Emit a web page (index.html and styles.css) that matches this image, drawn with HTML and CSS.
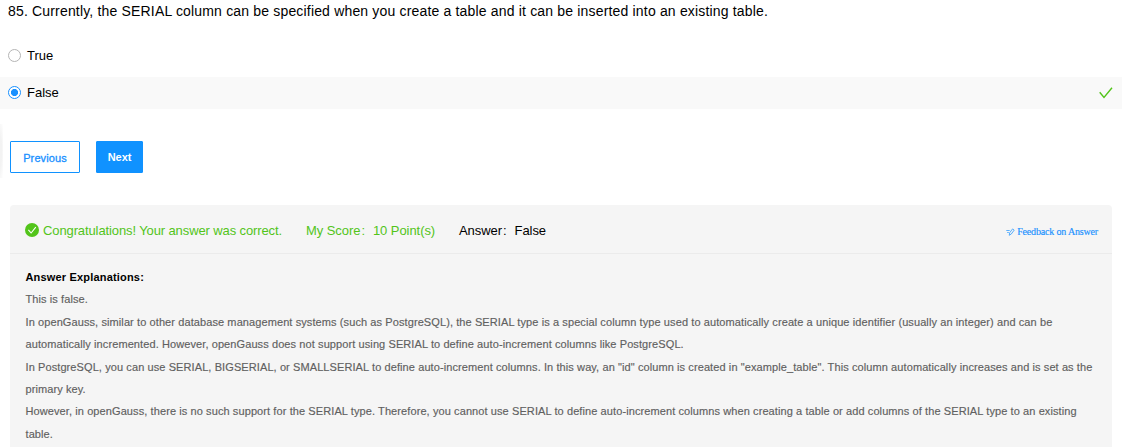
FILE: index.html
```html
<!DOCTYPE html>
<html lang="en">
<head>
<meta charset="utf-8">
<title>Question 85</title>
<link rel="stylesheet" href="styles.css">
</head>
<body>
<main class="page">
  <h1 class="question"><span>85. Currently, the SERIAL column can be specified when you create a table and it can be inserted into an existing table.</span></h1>
  <div class="option">
    <span class="radio"></span><span class="option-label">True</span>
  </div>
  <div class="option option-selected">
    <span class="radio radio-checked"></span><span class="option-label">False</span>
    <svg class="tick" width="14" height="12" viewBox="0 0 14 12" fill="none" stroke="#52c41a" stroke-width="1.4"><path d="M.7 5.2 5 10.4 13 .8"/></svg>
  </div>
  <div class="actions">
    <span class="edge"></span>
    <button class="btn btn-outline">Previous</button>
    <button class="btn btn-primary">Next</button>
  </div>
  <section class="result">
    <header class="summary">
      <svg class="badge" width="14" height="14" viewBox="0 0 14 14"><circle cx="7" cy="7" r="7" fill="#52c41a"/><path d="M3.4 6.8 6.1 10 10.8 4.2" fill="none" stroke="#fff" stroke-width="1.1"/></svg>
      <span class="congrats">Congratulations! Your answer was correct.</span>
      <span class="score"><span>My Score</span><span class="colon">:</span><span>10 Point(s)</span></span>
      <span class="answer"><span>Answer</span><span class="colon">:</span><span>False</span></span>
      <a class="feedback"><svg width="9" height="8" viewBox="0 0 9 8" fill="none" stroke="#1890ff" stroke-width=".7"><path d="M.3 2.5h3.4M1.2 4.5h1.6M3.2 7.3 3.7 4.7 6.6.9l1.6 1.2-2.9 3.9z"/></svg><span>Feedback on Answer</span></a>
    </header>
    <div class="explanation">
      <h2 class="heading">Answer Explanations:</h2>
      <p>This is false.</p>
      <p>In openGauss, similar to other database management systems (such as PostgreSQL), the SERIAL type is a special column type used to automatically create a unique identifier (usually an integer) and can be<br>automatically incremented. However, openGauss does not support using SERIAL to define auto-increment columns like PostgreSQL.</p>
      <p>In PostgreSQL, you can use SERIAL, BIGSERIAL, or SMALLSERIAL to define auto-increment columns. In this way, an "id" column is created in "example_table". This column automatically increases and is set as the<br>primary key.</p>
      <p>However, in openGauss, there is no such support for the SERIAL type. Therefore, you cannot use SERIAL to define auto-increment columns when creating a table or add columns of the SERIAL type to an existing<br>table.</p>
    </div>
  </section>
</main>
</body>
</html>
```
FILE: styles.css
```css
* { box-sizing: border-box; }
body {
  margin: 0;
  background: #fff;
  color: #000;
  font-family: "Liberation Sans", Arial, sans-serif;
  overflow: hidden;
}
.page { height: 447px; overflow: hidden; }
.question {
  margin: 0;
  padding: 0 8px;
  height: 40px;
  font-size: 14px;
  font-weight: 400;
  line-height: 22px;
  letter-spacing: 0.173px;
  white-space: nowrap;
}
.option {
  display: flex;
  align-items: center;
  height: 32px;
  padding: 0 9px 1px 8px;
  font-size: 13px;
}
.option-selected { margin-top: 5px; background: #f9f9f9; }
.radio {
  flex: none;
  width: 13px;
  height: 13px;
  margin-right: 6px;
  border: 1px solid #b5b5b5;
  border-radius: 50%;
  background: #fff;
}
.option-label { line-height: 15px; }
.radio-checked {
  border-color: #1890ff;
  background: radial-gradient(circle, #1890ff 3.2px, #fff 3.9px);
}
.tick { margin-left: auto; }
.actions {
  display: flex;
  height: 96px;
  padding-top: 32px;
}
.edge {
  width: 3px;
  height: 54px;
  margin: -17px 7px 0 0;
  background: radial-gradient(ellipse at left, #f3f3f3 40%, #fff 100%);
}
.btn {
  height: 32px;
  padding: 0;
  border: 1px solid #1092ff;
  border-radius: 1px;
  font: 700 11px "Liberation Sans", Arial, sans-serif;
}
.btn-outline {
  width: 70px;
  margin-right: 16px;
  padding-top: 2px;
  background: #fff;
  color: #1890ff;
  font-weight: 400;
  letter-spacing: 0.1px;
  -webkit-text-stroke: 0.3px #1890ff;
}
.btn-primary { width: 47px; background: #1092ff; color: #fff; letter-spacing: -0.1px; }
.result {
  margin: 0 10px;
  height: 260px;
  border-radius: 4px 4px 0 0;
  background: #f5f5f5;
}
.summary {
  display: flex;
  align-items: center;
  height: 49px;
  padding: 2px 14px 0 15px;
  border-bottom: 1px solid #ebebeb;
  font-size: 13px;
  white-space: nowrap;
}
.badge { margin-right: 4px; }
.congrats { width: 263px; color: #52c41a; letter-spacing: -0.11px; }
.score { display: flex; width: 153px; color: #52c41a; }
.score, .answer { letter-spacing: -0.06px; }
.answer { display: flex; }
.colon { width: 12.5px; padding-left: 1px; }
.feedback {
  display: flex;
  align-items: center;
  gap: 2px;
  margin-left: auto;
  padding-top: 3px;
  color: #1890ff;
  font: 10px "Liberation Serif", "Times New Roman", serif;
  letter-spacing: -0.17px;
  -webkit-text-stroke: 0.15px #1890ff;
}
.explanation {
  padding: 12px 15px 0 15.5px;
  color: #606060;
  font-size: 11px;
  line-height: 22.4px;
  letter-spacing: 0.094px;
  white-space: nowrap;
  -webkit-text-stroke: 0.15px #606060;
}
.explanation p { margin: 0; }
.heading {
  margin: 0;
  color: #000;
  font-size: 11px;
  font-weight: 700;
  letter-spacing: 0.18px;
  -webkit-text-stroke: 0;
}
```
